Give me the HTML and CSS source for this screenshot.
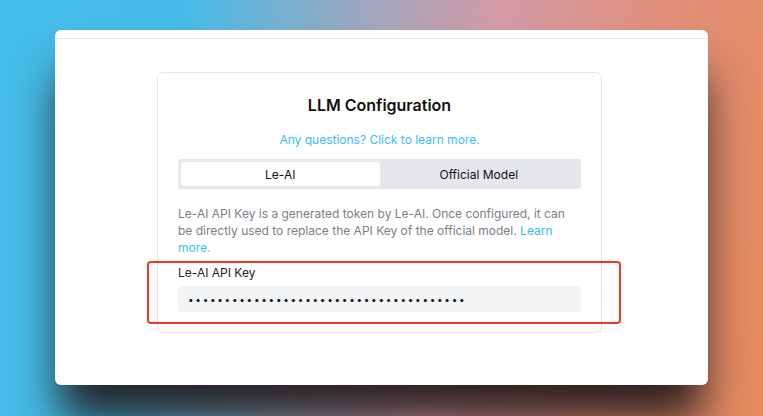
FILE: index.html
```html
<!DOCTYPE html>
<html lang="en">
<head>
<meta charset="utf-8">
<title>LLM Configuration</title>
<link rel="stylesheet" href="styles.css">
</head>
<body>
<div class="window">
  <div class="titlebar"></div>
  <div class="content">
    <div class="card">
      <h1 class="title">LLM Configuration</h1>
      <a class="help" href="#">Any questions? Click to learn more.</a>
      <div class="tabs">
        <div class="tab active">Le-AI</div>
        <div class="tab">Official Model</div>
      </div>
      <p class="desc">Le-AI API Key is a generated token by Le-AI. Once configured, it can be directly used to replace the API Key of the official model. <a href="#">Learn more.</a></p>
      <label class="label">Le-AI API Key</label>
      <div class="input">••••••••••••••••••••••••••••••••••••••</div>
      <div class="highlight"></div>
    </div>
  </div>
</div>
</body>
</html>
```

FILE: styles.css
```css
* { box-sizing: border-box; }
html, body { margin: 0; padding: 0; }
body {
  width: 763px;
  height: 416px;
  overflow: hidden;
  font-family: Inter, "Noto Sans", sans-serif;
  background: linear-gradient(100deg, #44bee9 0%, #45bce7 22%, #a2a7bc 45%, #d49aa6 60%, #e0907a 80%, #e68b5c 100%);
  padding-top: 30px;
}
.window {
  margin-left: 55px;
  width: 653px;
  height: 355px;
  background: #fff;
  border-radius: 6px;
  box-shadow: 0 40px 45px -5px rgba(30, 22, 22, 0.92);
  display: flex;
  flex-direction: column;
}
.titlebar {
  height: 9px;
  border-bottom: 1px solid #e5e5e5;
}
.content {
  display: flex;
  justify-content: center;
  padding-top: 33px;
  padding-right: 4px;
}
.card {
  position: relative;
  width: 445px;
  height: 261px;
  border: 1px solid #e8e8ea;
  border-radius: 6px;
  padding: 21px 20px 20px;
  display: flex;
  flex-direction: column;
}
.title {
  margin: 0;
  font-size: 16px;
  line-height: 22px;
  font-weight: 600;
  color: #111;
  text-align: center;
}
.help {
  margin-top: 16px;
  font-size: 12px;
  line-height: 16px;
  color: #38bdf8;
  text-decoration: none;
  text-align: center;
}
.tabs {
  margin-top: 11px;
  height: 30px;
  background: #e5e7eb;
  border-radius: 3px;
  padding: 3px;
  display: flex;
}
.tab {
  flex: 1;
  display: flex;
  align-items: center;
  justify-content: center;
  font-size: 12px;
  color: #111;
  border-radius: 3px;
}
.tab.active { background: #fff; }
.desc {
  margin: 16px 0 0;
  font-size: 12px;
  line-height: 17px;
  color: #7a7f88;
}
.desc a { color: #38bdf8; text-decoration: none; }
.label {
  margin-top: 9px;
  font-size: 12px;
  line-height: 16px;
  color: #1f2329;
}
.input {
  margin-top: 5px;
  height: 26px;
  background: #f3f4f6;
  border-radius: 4px;
  padding-left: 10px;
  display: flex;
  align-items: center;
  font-size: 10px;
  letter-spacing: 1.7px;
  color: #1a1a1a;
}
.highlight {
  position: absolute;
  left: -11px;
  top: 188px;
  width: 474px;
  height: 63px;
  border: 2px solid #ef3b22;
  border-radius: 4px;
}
```
